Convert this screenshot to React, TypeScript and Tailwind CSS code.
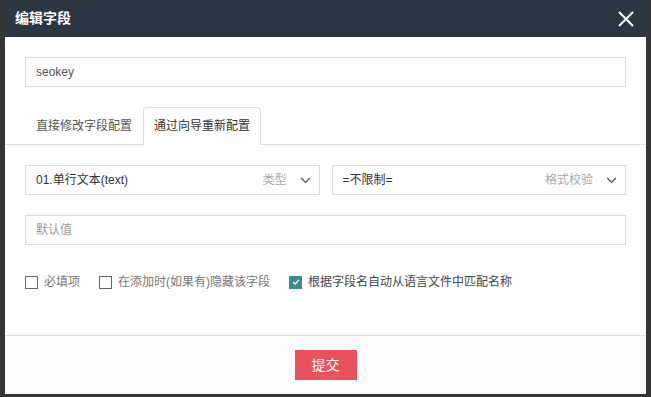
import React, { useState } from "react";

const font = { fontFamily: '"Liberation Sans", "Noto Sans CJK SC", sans-serif' };

function Chevron() {
  return (
    <svg viewBox="0 0 12 8" className="w-[11px] h-[7px]" fill="none">
      <path d="M1 1.2 L6 6.2 L11 1.2" stroke="#555" strokeWidth="1.5" />
    </svg>
  );
}

function Select({ value, hint }: { value: string; hint: string }) {
  return (
    <div className="h-[30px] border border-[#dcdcdc] flex items-center pl-[10px] pr-[8px]">
      <span className="flex-1 text-[12px] text-[#333]">{value}</span>
      <span className="text-[12px] text-[#aaa] mr-[13px]">{hint}</span>
      <Chevron />
    </div>
  );
}

function Check({
  label,
  checked,
  onToggle,
}: {
  label: string;
  checked: boolean;
  onToggle: () => void;
}) {
  return (
    <label className="flex items-center cursor-pointer" onClick={onToggle}>
      <span
        className={`w-[13px] h-[13px] flex items-center justify-center ${
          checked ? "bg-[#3b8991]" : "border border-[#666] bg-white"
        }`}
      >
        {checked && (
          <svg viewBox="0 0 12 12" className="w-[10px] h-[10px]" fill="none">
            <path d="M2.5 6.2 L5 8.5 L9.5 3.5" stroke="#fff" strokeWidth="1.6" />
          </svg>
        )}
      </span>
      <span className={`ml-[6px] text-[12px] ${checked ? "text-[#444]" : "text-[#777]"}`}>
        {label}
      </span>
    </label>
  );
}

export default function App() {
  const [tab, setTab] = useState(1);
  const [checks, setChecks] = useState([false, false, true]);

  const toggle = (i: number) =>
    setChecks(checks.map((c, j) => (j === i ? !c : c)));

  const tabs = ["直接修改字段配置", "通过向导重新配置"];

  return (
    <div className="w-[651px] h-[397px] bg-[#353535] px-[5px] pb-[3px]" style={font}>
      <div className="h-[394px] bg-white flex flex-col">
        <div className="h-[37px] bg-[#2b3643] flex items-center justify-between pl-[10px] pr-[12px] shrink-0">
          <span className="text-white text-[14px] font-bold">编辑字段</span>
          <svg viewBox="0 0 16 16" className="w-[16px] h-[16px]" fill="none">
            <path d="M1 1 L15 15 M15 1 L1 15" stroke="#fff" strokeWidth="2" />
          </svg>
        </div>

        <div className="flex-1">
          <div className="px-[20px] pt-[20px]">
            <div className="h-[30px] border border-[#dcdcdc] flex items-center px-[10px] text-[12px] text-[#555]">
              seokey
            </div>
          </div>

          <div className="mt-[20px] border-b border-[#ddd] flex pl-[20px]">
            {tabs.map((t, i) => (
              <button
                key={t}
                type="button"
                onClick={() => setTab(i)}
                className={`h-[38px] px-[10px] text-[12px] -mb-px rounded-t-[4px] border ${
                  tab === i
                    ? "bg-white border-[#ddd] border-b-white text-[#333]"
                    : "border-transparent text-[#555]"
                }`}
              >
                {t}
              </button>
            ))}
          </div>

          <div className="px-[20px] pt-[20px]">
            <div className="grid grid-cols-2 gap-[12px]">
              <Select value="01.单行文本(text)" hint="类型" />
              <Select value="=不限制=" hint="格式校验" />
            </div>
            <div className="mt-[20px] h-[30px] border border-[#dcdcdc] flex items-center px-[10px] text-[12px] text-[#999]">
              默认值
            </div>
            <div className="mt-[28px] flex items-center gap-[19px]">
              <Check label="必填项" checked={checks[0]} onToggle={() => toggle(0)} />
              <Check label="在添加时(如果有)隐藏该字段" checked={checks[1]} onToggle={() => toggle(1)} />
              <Check label="根据字段名自动从语言文件中匹配名称" checked={checks[2]} onToggle={() => toggle(2)} />
            </div>
          </div>
        </div>

        <div className="h-[59px] shrink-0 border-t border-[#ddd] bg-[#fbfbfb] flex items-center justify-center">
          <button
            type="button"
            className="w-[62px] h-[30px] bg-[#e8515d] text-white text-[14px]"
          >
            提交
          </button>
        </div>
      </div>
    </div>
  );
}
